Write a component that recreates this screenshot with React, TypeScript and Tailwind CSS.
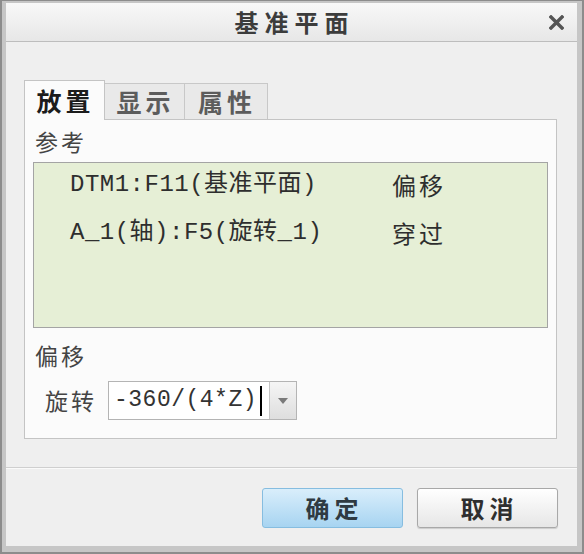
const cjk = { fontFamily: '"Noto Sans CJK SC", "Noto Sans", sans-serif' };
const mono = { fontFamily: '"Liberation Mono", "Noto Sans CJK SC", monospace' };

const refs = [
  { name: "DTM1:F11(基准平面)", kind: "偏移" },
  { name: "A_1(轴):F5(旋转_1)", kind: "穿过" },
];

function Tab({ label, active = false, width }: { label: string; active?: boolean; width: string }) {
  if (active) {
    return (
      <div
        className={`${width} h-[40px] -mb-px relative z-10 flex items-center justify-center bg-[#fbfbfb] border border-b-0 border-[#c4c4c4] text-[25px] font-bold text-[#1c1c1c] tracking-[4px] pl-[2px]`}
      >
        {label}
      </div>
    );
  }
  return (
    <div
      className={`${width} h-[36px] flex items-center justify-center bg-[#e9e9e9] border border-l-0 border-b-0 border-[#c8c8c8] text-[25px] font-bold text-[#5c5c5c] tracking-[4px] pl-[2px]`}
    >
      {label}
    </div>
  );
}

export default function App() {
  return (
    <div className="w-[584px] h-[554px] bg-[#8c8c8c] pl-[2px] pr-[2px] pt-[1px] pb-[2px]" style={cjk}>
      <div className="w-full h-full bg-[#c6c6c6] pl-[4px] pr-[5px] pt-[2px] pb-[6px] flex flex-col">
        {/* title bar */}
        <div className="h-[39px] shrink-0 relative flex items-center justify-center bg-gradient-to-b from-[#f8f8f8] to-[#e7e7e7] border-b border-[#bdbdbd]">
          <span className="text-[24px] font-bold text-[#3c3c3c] tracking-[6px] pl-[6px]">基准平面</span>
          <svg className="absolute right-[13px] top-[12px]" width="15" height="15" viewBox="0 0 15 15">
            <path d="M2 2 L13 13 M13 2 L2 13" stroke="#555" strokeWidth="3.4" strokeLinecap="square" />
          </svg>
        </div>

        {/* body */}
        <div className="h-[426px] shrink-0 bg-[#efefef] pt-[38px] pl-[18px] pr-[20px] border-b border-[#cfcfcf]">
          <div className="flex items-end h-[39px]">
            <Tab label="放置" active width="w-[81px]" />
            <Tab label="显示" width="w-[80px]" />
            <Tab label="属性" width="w-[83px]" />
          </div>
          <div className="h-[320px] bg-[#fbfbfb] border border-[#c4c4c4] px-[8px] pt-[9px]">
            <div className="h-[24px] leading-[24px] pl-[2px] text-[23px] text-[#444] tracking-[3px]">参考</div>
            <div className="mt-[9px] h-[166px] bg-[#e6efd6] border border-[#a4a4a4] pl-[36px] pt-[4px] flex flex-col gap-[12px]">
              {refs.map((r) => (
                <div key={r.name} className="h-[36px] flex items-center text-[#2e2e2e]">
                  <span className="w-[322px] text-[24px] tracking-[0.5px]" style={mono}>
                    {r.name}
                  </span>
                  <span className="text-[24px] tracking-[3px]" style={cjk}>
                    {r.kind}
                  </span>
                </div>
              ))}
            </div>
            <div className="mt-[15px] h-[24px] leading-[24px] pl-[2px] text-[23px] text-[#444] tracking-[3px]">偏移</div>
            <div className="mt-[14px] flex items-center pl-[12px] gap-[11px]">
              <span className="text-[23px] text-[#444] tracking-[3px]">旋转</span>
              <div className="flex h-[39px] border border-[#b4b4b4] bg-white">
                <div className="w-[160px] flex items-center pl-[5px] text-[23px] text-[#333]" style={mono}>
                  <span className="tracking-[0.5px]">-360/(4*Z)</span>
                  <span className="ml-[3px] w-[2px] h-[30px] bg-black" />
                </div>
                <div className="w-[27px] flex items-center justify-center bg-gradient-to-b from-[#f5f5f5] to-[#dedede] border-l border-[#c4c4c4]">
                  <svg width="10" height="6" viewBox="0 0 10 6">
                    <path d="M0 0 L10 0 L5 6 Z" fill="#7a7a7a" />
                  </svg>
                </div>
              </div>
            </div>
          </div>
        </div>

        {/* footer */}
        <div className="flex-1 bg-[#efefef] border-t border-[#fafafa] flex justify-end items-start pt-[19px] pr-[19px] gap-[14px]">
          <button className="w-[141px] h-[40px] rounded-[3px] border border-[#86bde0] bg-gradient-to-b from-[#d9eefb] to-[#a7d4f1] text-[24px] font-bold text-[#2f3a42] tracking-[5px] pl-[4px]">
            确定
          </button>
          <button className="w-[141px] h-[40px] rounded-[3px] border border-[#a8a8a8] bg-gradient-to-b from-[#ffffff] to-[#e6e6e6] text-[24px] font-bold text-[#2f2f2f] tracking-[5px] pl-[4px] shadow-[0_1px_1px_rgba(0,0,0,0.15)]">
            取消
          </button>
        </div>
      </div>
    </div>
  );
}
